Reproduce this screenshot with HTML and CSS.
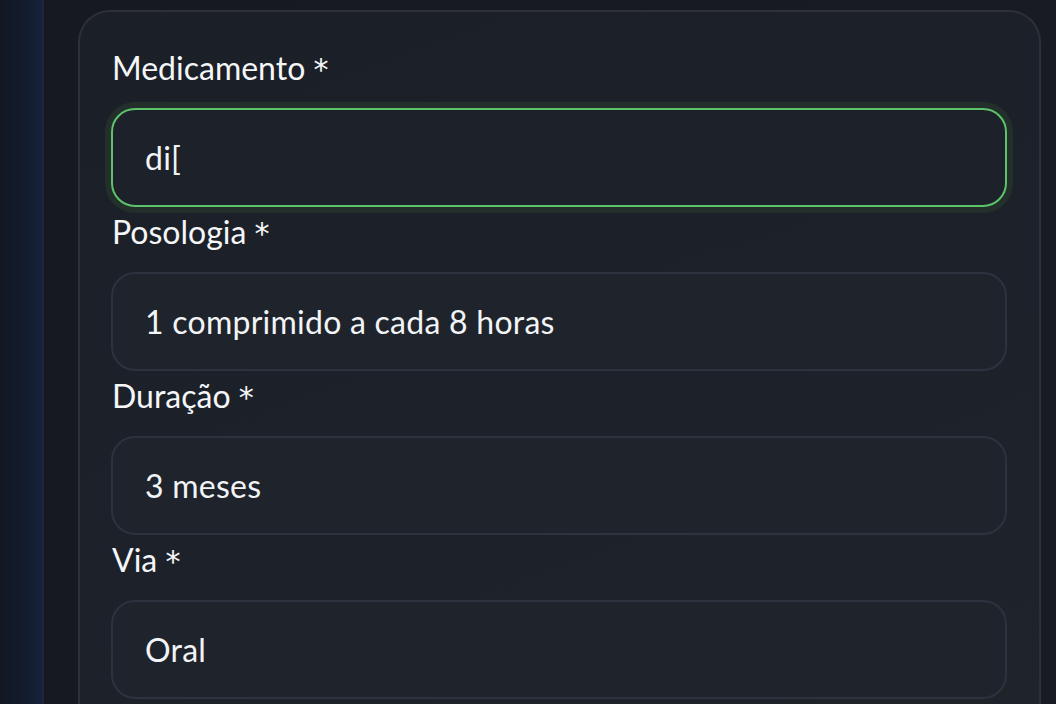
FILE: index.html
```html
<!DOCTYPE html>
<html lang="pt">
<head>
<meta charset="utf-8">
<link rel="stylesheet" href="styles.css">
</head>
<body>
<div class="page">
  <div class="edge"></div>
  <main class="main">
    <form class="card">
      <div class="field">
        <label class="label">Medicamento <span class="req">*</span></label>
        <div class="input focused">di[</div>
      </div>
      <div class="field">
        <label class="label">Posologia <span class="req">*</span></label>
        <div class="input">1 comprimido a cada 8 horas</div>
      </div>
      <div class="field">
        <label class="label">Duração <span class="req">*</span></label>
        <div class="input">3 meses</div>
      </div>
      <div class="field">
        <label class="label">Via <span class="req">*</span></label>
        <div class="input">Oral</div>
      </div>
    </form>
  </main>
</div>
</body>
</html>
```

FILE: styles.css
```css
html, body {
  margin: 0;
  padding: 0;
  height: 100%;
  overflow: hidden;
}
body {
  background: #15181f;
  font-family: "Lato", "DejaVu Sans", sans-serif;
  color: #f2f4f7;
}
.page {
  display: flex;
  height: 704px;
  overflow: hidden;
}
.edge {
  width: 42px;
  flex: none;
  background: linear-gradient(90deg, #121722 0%, #131c2d 60%, #15223a 100%);
  border-right: 2px solid #1d2840;
}
.main {
  flex: 1;
  display: flex;
  flex-direction: column;
  padding: 10px 16px 0 34px;
  background: linear-gradient(90deg, #161920 0%, #181b22 100%);
}
.card {
  flex: 1;
  width: 896px;
  margin: 0;
  border: 2px solid #2b303b;
  border-bottom: none;
  border-radius: 32px 32px 0 0;
  padding: 31px 32px 0 31px;
  background: linear-gradient(160deg, #1b1f27 0%, #1d222a 60%, #1f242b 100%);
  overflow: hidden;
}
.field {
  display: flex;
  flex-direction: column;
}
.label {
  display: block;
  font-size: 32px;
  line-height: 50px;
  height: 50px;
  margin-bottom: 15px;
  padding-left: 1px;
  color: #f5f6f8;
}
.req {
  font-family: "DejaVu Sans", sans-serif;
  font-size: 30px;
}
.input {
  box-sizing: border-box;
  height: 99px;
  flex: none;
  border: 2px solid #2c323e;
  border-radius: 24px;
  background: #1f242c;
  padding: 0 32px;
  display: flex;
  align-items: center;
  font-size: 32px;
  letter-spacing: 0.25px;
  color: #f2f4f7;
}
.input.focused {
  border-color: #5cc36a;
  box-shadow: 0 0 0 6px #232f2b;
  background: #1d2129;
}
```
